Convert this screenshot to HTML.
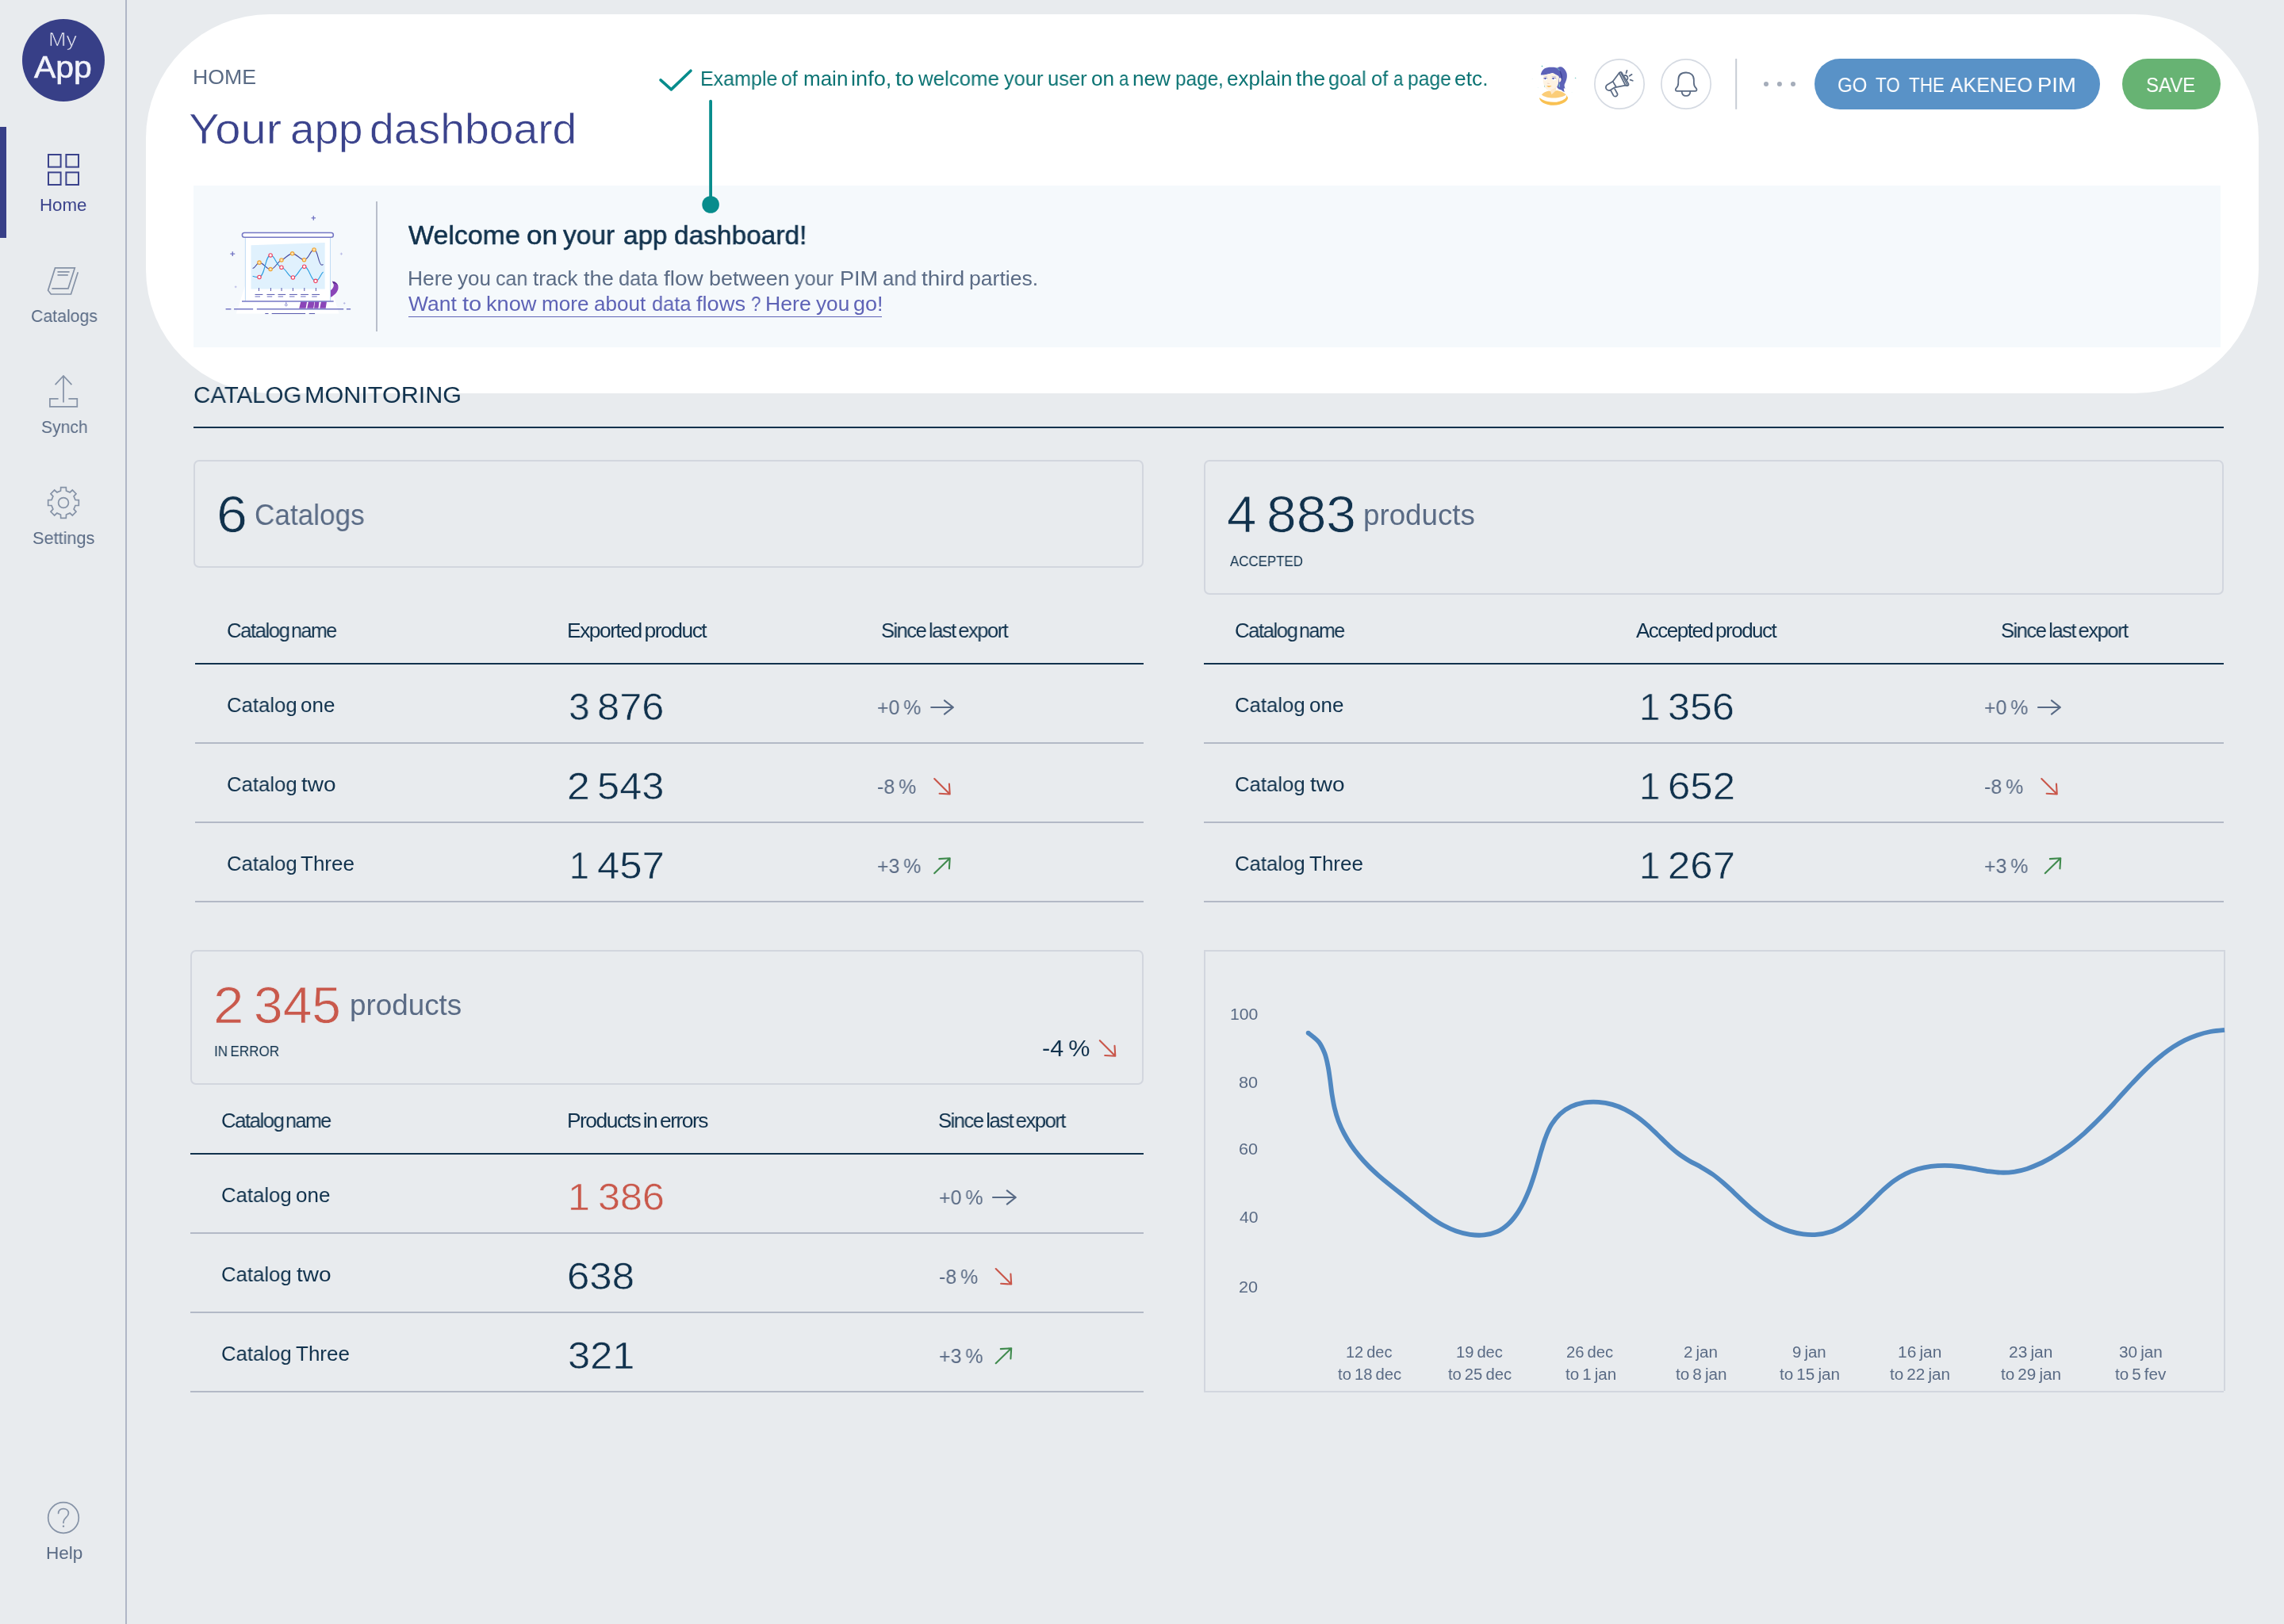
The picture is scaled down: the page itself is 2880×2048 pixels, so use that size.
<!DOCTYPE html>
<html lang="en"><head><meta charset="utf-8"><title>Your app dashboard</title>
<style>
html,body{margin:0;padding:0}
body{width:2880px;height:2048px;overflow:hidden;background:#e8ebee;font-family:"Liberation Sans",sans-serif;position:relative}
.t{position:absolute;white-space:pre;line-height:1;transform-origin:0 0;display:block;will-change:transform}
.r{position:absolute}
.card{position:absolute;box-sizing:border-box;border:2px solid #d2d6de}
.abs{position:absolute}
svg.ov{position:absolute;left:0;top:0;width:2880px;height:2048px;pointer-events:none}
</style></head>
<body>
<nav>
<div class="abs" style="left:158px;top:0;width:2px;height:2048px;background:#b0b7c6"></div>
<div class="abs" style="left:28px;top:23.7px;width:104px;height:104px;border-radius:50%;background:#373f87"></div>
<div class="abs" style="left:0;top:160px;width:8px;height:140px;background:#373f87"></div>
<span class="t" style="left:60.56px;top:38px;font-size:24px;color:rgba(255,255,255,.9);transform:scaleX(1.1200);-webkit-text-stroke:0.7px #373f87;">My</span>
<span class="t" style="left:42.80px;top:66px;font-size:38.5px;color:#f2f3fa;transform:scaleX(1.0622);-webkit-text-stroke:0.6px #f2f3fa;">App</span>
<span class="t" style="left:50.18px;top:248px;font-size:22px;color:#3b438c;transform:scaleX(1.0142);">Home</span>
<span class="t" style="left:39.03px;top:388px;font-size:22px;color:#5a6b85;transform:scaleX(0.9682);">Catalogs</span>
<span class="t" style="left:51.84px;top:528px;font-size:22px;color:#5a6b85;transform:scaleX(0.9573);">Synch</span>
<span class="t" style="left:40.61px;top:668px;font-size:22px;color:#5a6b85;transform:scaleX(0.9858);">Settings</span>
<span class="t" style="left:57.66px;top:1948px;font-size:22px;color:#5a6b85;transform:scaleX(1.0256);">Help</span>
</nav>
<header>
<div class="abs" style="left:184px;top:18px;width:2664px;height:478px;border-radius:156px;background:#fff"></div>
<div class="abs" style="left:244px;top:234px;width:2556px;height:204px;background:#f5f9fc"></div>
<div class="abs" style="left:474px;top:254px;width:2px;height:163.5px;background:#b9bfcb"></div>
<div class="abs" style="left:2288px;top:73.8px;width:360px;height:64.2px;border-radius:33px;background:#5992c7"></div>
<div class="abs" style="left:2675.8px;top:73.8px;width:124.2px;height:64.2px;border-radius:33px;background:#67b373"></div>
<span class="t" style="left:243.45px;top:84px;font-size:26px;color:#5a6b85;transform:scaleX(1.0267);">HOME</span>
<div class="s"><span class="t" style="left:238.35px;top:135px;font-size:54px;color:#3b438c;transform:scaleX(1.0731);-webkit-text-stroke:0.6px #ffffff;">Your</span> <span class="t" style="left:366.21px;top:135px;font-size:54px;color:#3b438c;transform:scaleX(1.0147);-webkit-text-stroke:0.6px #ffffff;">app</span> <span class="t" style="left:466.19px;top:135px;font-size:54px;color:#3b438c;transform:scaleX(1.0241);-webkit-text-stroke:0.6px #ffffff;">dashboard</span></div>
<div class="s"><span class="t" style="left:882.58px;top:86px;font-size:26px;color:#0b7373;transform:scaleX(0.9617);">Example</span> <span class="t" style="left:985.30px;top:86px;font-size:26px;color:#0b7373;transform:scaleX(0.9524);">of</span> <span class="t" style="left:1013.00px;top:86px;font-size:26px;color:#0b7373;transform:scaleX(1.0000);">main</span> <span class="t" style="left:1073.43px;top:86px;font-size:26px;color:#0b7373;transform:scaleX(1.0440);">info,</span> <span class="t" style="left:1128.96px;top:86px;font-size:26px;color:#0b7373;transform:scaleX(1.0875);">to</span> <span class="t" style="left:1158.00px;top:86px;font-size:26px;color:#0b7373;transform:scaleX(0.9926);">welcome</span> <span class="t" style="left:1266.25px;top:86px;font-size:26px;color:#0b7373;transform:scaleX(0.9750);">your</span> <span class="t" style="left:1321.03px;top:86px;font-size:26px;color:#0b7373;transform:scaleX(0.9794);">user</span> <span class="t" style="left:1375.99px;top:86px;font-size:26px;color:#0b7373;transform:scaleX(1.0094);">on</span> <span class="t" style="left:1410.59px;top:86px;font-size:26px;color:#0b7373;transform:scaleX(0.8600);">a</span> <span class="t" style="left:1428.49px;top:86px;font-size:26px;color:#0b7373;transform:scaleX(1.0054);">new</span> <span class="t" style="left:1482.35px;top:86px;font-size:26px;color:#0b7373;transform:scaleX(0.9350);">page,</span> <span class="t" style="left:1547.00px;top:86px;font-size:26px;color:#0b7373;transform:scaleX(1.0000);">explain</span> <span class="t" style="left:1633.99px;top:86px;font-size:26px;color:#0b7373;transform:scaleX(1.0290);">the</span> <span class="t" style="left:1675.28px;top:86px;font-size:26px;color:#0b7373;transform:scaleX(0.9677);">goal</span> <span class="t" style="left:1728.52px;top:86px;font-size:26px;color:#0b7373;transform:scaleX(0.9762);">of</span> <span class="t" style="left:1756.71px;top:86px;font-size:26px;color:#0b7373;transform:scaleX(0.8600);">a</span> <span class="t" style="left:1774.83px;top:86px;font-size:26px;color:#0b7373;transform:scaleX(0.9455);">page</span> <span class="t" style="left:1834.49px;top:86px;font-size:26px;color:#0b7373;transform:scaleX(1.0130);">etc.</span></div>
<div class="s"><span class="t" style="left:2317.37px;top:94px;font-size:26px;color:#ffffff;transform:scaleX(0.9211);">GO</span> <span class="t" style="left:2365.33px;top:94px;font-size:26px;color:#ffffff;transform:scaleX(0.8600);">TO</span> <span class="t" style="left:2406.57px;top:94px;font-size:26px;color:#ffffff;transform:scaleX(0.8614);">THE</span> <span class="t" style="left:2458.75px;top:94px;font-size:26px;color:#ffffff;transform:scaleX(0.9579);">AKENEO</span> <span class="t" style="left:2569.14px;top:94px;font-size:26px;color:#ffffff;transform:scaleX(1.0536);">PIM</span></div>
<span class="t" style="left:2705.62px;top:94px;font-size:26px;color:#ffffff;transform:scaleX(0.9231);">SAVE</span>
<div class="s"><span class="t" style="left:514.80px;top:279px;font-size:34px;color:#11324d;transform:scaleX(0.9979);-webkit-text-stroke:0.55px #11324d;">Welcome</span> <span class="t" style="left:663.96px;top:279px;font-size:34px;color:#11324d;transform:scaleX(1.0357);-webkit-text-stroke:0.55px #11324d;">on</span> <span class="t" style="left:710.00px;top:279px;font-size:34px;color:#11324d;transform:scaleX(0.9848);-webkit-text-stroke:0.55px #11324d;">your</span> <span class="t" style="left:785.77px;top:279px;font-size:34px;color:#11324d;transform:scaleX(0.9771);-webkit-text-stroke:0.55px #11324d;">app</span> <span class="t" style="left:850.27px;top:279px;font-size:34px;color:#11324d;transform:scaleX(0.9835);-webkit-text-stroke:0.55px #11324d;">dashboard!</span></div>
<div class="s"><span class="t" style="left:513.67px;top:338px;font-size:26px;color:#5a6b85;transform:scaleX(1.0151);">Here</span> <span class="t" style="left:577.00px;top:338px;font-size:26px;color:#5a6b85;transform:scaleX(1.0000);">you</span> <span class="t" style="left:624.79px;top:338px;font-size:26px;color:#5a6b85;transform:scaleX(0.9620);">can</span> <span class="t" style="left:672.00px;top:338px;font-size:26px;color:#5a6b85;transform:scaleX(1.0045);">track</span> <span class="t" style="left:736.48px;top:338px;font-size:26px;color:#5a6b85;transform:scaleX(1.0435);">the</span> <span class="t" style="left:780.28px;top:338px;font-size:26px;color:#5a6b85;transform:scaleX(0.9747);">data</span> <span class="t" style="left:836.96px;top:338px;font-size:26px;color:#5a6b85;transform:scaleX(1.0761);">flow</span> <span class="t" style="left:893.95px;top:338px;font-size:26px;color:#5a6b85;transform:scaleX(1.0342);">between</span> <span class="t" style="left:1002.00px;top:338px;font-size:26px;color:#5a6b85;transform:scaleX(0.9700);">your</span> <span class="t" style="left:1059.17px;top:338px;font-size:26px;color:#5a6b85;transform:scaleX(1.0417);">PIM</span> <span class="t" style="left:1112.76px;top:338px;font-size:26px;color:#5a6b85;transform:scaleX(0.9877);">and</span> <span class="t" style="left:1162.46px;top:338px;font-size:26px;color:#5a6b85;transform:scaleX(1.0722);">third</span> <span class="t" style="left:1222.22px;top:338px;font-size:26px;color:#5a6b85;transform:scaleX(1.0215);">parties.</span></div>
<div class="s"><span class="t" style="left:514.50px;top:370px;font-size:26px;color:#5e63b6;transform:scaleX(1.0168);">Want</span> <span class="t" style="left:583.24px;top:370px;font-size:26px;color:#5e63b6;transform:scaleX(1.1200);">to</span> <span class="t" style="left:612.93px;top:370px;font-size:26px;color:#5e63b6;transform:scaleX(1.0466);">know</span> <span class="t" style="left:682.99px;top:370px;font-size:26px;color:#5e63b6;transform:scaleX(1.0044);">more</span> <span class="t" style="left:748.50px;top:370px;font-size:26px;color:#5e63b6;transform:scaleX(1.0039);">about</span> <span class="t" style="left:821.53px;top:370px;font-size:26px;color:#5e63b6;transform:scaleX(0.9747);">data</span> <span class="t" style="left:878.23px;top:370px;font-size:26px;color:#5e63b6;transform:scaleX(1.0474);">flows</span> <span class="t" style="left:946.89px;top:370px;font-size:26px;color:#5e63b6;transform:scaleX(0.8600);">?</span> <span class="t" style="left:964.95px;top:370px;font-size:26px;color:#5e63b6;transform:scaleX(1.0236);">Here</span> <span class="t" style="left:1028.75px;top:370px;font-size:26px;color:#5e63b6;transform:scaleX(1.0062);">you</span> <span class="t" style="left:1076.46px;top:370px;font-size:26px;color:#5e63b6;transform:scaleX(1.0379);">go!</span></div>
<div class="abs" style="left:514.5px;top:398.6px;width:597.5px;height:1.6px;background:#5e63b6"></div>
</header>
<main>
<div class="s"><span class="t" style="left:243.53px;top:483px;font-size:30px;color:#11324d;transform:scaleX(0.9815);">CATALOG</span> <span class="t" style="left:384.45px;top:483px;font-size:30px;color:#11324d;transform:scaleX(1.0184);">MONITORING</span></div>
<div class="r" style="left:244px;top:538.00px;width:2560.00px;height:2px;background:#11324d"></div>
<div class="card" style="left:244px;top:580px;width:1198.00px;height:136.00px;border-radius:7px"></div>
<div class="card" style="left:1518px;top:580px;width:1286.00px;height:170.00px;border-radius:7px"></div>
<div class="card" style="left:240px;top:1198px;width:1202.00px;height:170.00px;border-radius:7px"></div>
<div class="abs" style="left:1518px;top:1198px;width:1286px;height:2px;background:#d2d6de"></div><div class="abs" style="left:1518px;top:1198px;width:2px;height:558px;background:#d2d6de"></div><div class="abs" style="left:1518px;top:1754px;width:1286px;height:2px;background:#d2d6de"></div><div class="abs" style="left:2804px;top:1198px;width:2px;height:556px;background:#d2d6de"></div>
<span class="t" style="left:273.17px;top:617px;font-size:64px;color:#11324d;transform:scaleX(1.0948);-webkit-text-stroke:0.75px #e8ebee;">6</span>
<span class="t" style="left:321.05px;top:632px;font-size:36px;color:#5a6b85;transform:scaleX(0.9766);">Catalogs</span>
<div class="s"><span class="t" style="left:1547.40px;top:617px;font-size:64px;color:#11324d;transform:scaleX(1.0476);-webkit-text-stroke:0.75px #e8ebee;">4</span> <span class="t" style="left:1596.83px;top:617px;font-size:64px;color:#11324d;transform:scaleX(1.0572);-webkit-text-stroke:0.75px #e8ebee;">883</span></div>
<span class="t" style="left:1719.45px;top:632px;font-size:36px;color:#5a6b85;transform:scaleX(1.0204);">products</span>
<span class="t" style="left:1550.75px;top:699px;font-size:18px;color:#11324d;transform:scaleX(0.9381);">ACCEPTED</span>
<div class="s"><span class="t" style="left:285.51px;top:782px;font-size:26px;color:#11324d;transform:scaleX(0.9903);letter-spacing:-1.5px;">Catalog</span> <span class="t" style="left:366.56px;top:782px;font-size:26px;color:#11324d;transform:scaleX(0.9612);letter-spacing:-1.5px;">name</span></div>
<span class="t" style="left:714.96px;top:782px;font-size:26px;color:#11324d;transform:scaleX(1.0190);letter-spacing:-1.5px;word-spacing:-0.08em;">Exported product</span>
<span class="t" style="left:1111.03px;top:782px;font-size:26px;color:#11324d;transform:scaleX(0.9797);letter-spacing:-1.5px;word-spacing:-0.08em;">Since last export</span>
<div class="s"><span class="t" style="left:285.52px;top:876px;font-size:26px;color:#11324d;transform:scaleX(0.9884);">Catalog</span> <span class="t" style="left:379.00px;top:876px;font-size:26px;color:#11324d;transform:scaleX(1.0000);">one</span></div>
<div class="s"><span class="t" style="left:285.52px;top:976px;font-size:26px;color:#11324d;transform:scaleX(0.9884);">Catalog</span> <span class="t" style="left:379.96px;top:976px;font-size:26px;color:#11324d;transform:scaleX(1.0769);">two</span></div>
<div class="s"><span class="t" style="left:285.52px;top:1076px;font-size:26px;color:#11324d;transform:scaleX(0.9884);">Catalog</span> <span class="t" style="left:379.00px;top:1076px;font-size:26px;color:#11324d;transform:scaleX(1.0000);">Three</span></div>
<div class="s"><span class="t" style="left:716.79px;top:867px;font-size:49px;color:#11324d;transform:scaleX(0.9783);-webkit-text-stroke:0.55px #e8ebee;">3</span> <span class="t" style="left:752.92px;top:867px;font-size:49px;color:#11324d;transform:scaleX(1.0325);-webkit-text-stroke:0.55px #e8ebee;">876</span></div>
<div class="s"><span class="t" style="left:715.36px;top:967px;font-size:49px;color:#11324d;transform:scaleX(1.0568);-webkit-text-stroke:0.55px #e8ebee;">2</span> <span class="t" style="left:752.92px;top:967px;font-size:49px;color:#11324d;transform:scaleX(1.0325);-webkit-text-stroke:0.55px #e8ebee;">543</span></div>
<div class="s"><span class="t" style="left:717.59px;top:1067px;font-size:49px;color:#11324d;transform:scaleX(0.9146);-webkit-text-stroke:0.55px #e8ebee;">1</span> <span class="t" style="left:752.94px;top:1067px;font-size:49px;color:#11324d;transform:scaleX(1.0387);-webkit-text-stroke:0.55px #e8ebee;">457</span></div>
<span class="t" style="left:1106.04px;top:879px;font-size:26px;color:#5a6b85;transform:scaleX(0.9554);word-spacing:-0.08em;">+0 %</span>
<span class="t" style="left:1106.04px;top:979px;font-size:26px;color:#5a6b85;transform:scaleX(0.9596);word-spacing:-0.08em;">-8 %</span>
<span class="t" style="left:1106.04px;top:1079px;font-size:26px;color:#5a6b85;transform:scaleX(0.9554);word-spacing:-0.08em;">+3 %</span>
<div class="s"><span class="t" style="left:1557.26px;top:782px;font-size:26px;color:#11324d;transform:scaleX(0.9903);letter-spacing:-1.5px;">Catalog</span> <span class="t" style="left:1638.31px;top:782px;font-size:26px;color:#11324d;transform:scaleX(0.9612);letter-spacing:-1.5px;">name</span></div>
<span class="t" style="left:2062.50px;top:782px;font-size:26px;color:#11324d;transform:scaleX(1.0000);letter-spacing:-1.5px;word-spacing:-0.08em;">Accepted product</span>
<span class="t" style="left:2522.78px;top:782px;font-size:26px;color:#11324d;transform:scaleX(0.9825);letter-spacing:-1.5px;word-spacing:-0.08em;">Since last export</span>
<div class="s"><span class="t" style="left:1557.27px;top:876px;font-size:26px;color:#11324d;transform:scaleX(0.9884);">Catalog</span> <span class="t" style="left:1650.75px;top:876px;font-size:26px;color:#11324d;transform:scaleX(1.0000);">one</span></div>
<div class="s"><span class="t" style="left:1557.27px;top:976px;font-size:26px;color:#11324d;transform:scaleX(0.9884);">Catalog</span> <span class="t" style="left:1651.71px;top:976px;font-size:26px;color:#11324d;transform:scaleX(1.0769);">two</span></div>
<div class="s"><span class="t" style="left:1557.27px;top:1076px;font-size:26px;color:#11324d;transform:scaleX(0.9884);">Catalog</span> <span class="t" style="left:1650.75px;top:1076px;font-size:26px;color:#11324d;transform:scaleX(1.0000);">Three</span></div>
<div class="s"><span class="t" style="left:2067.35px;top:867px;font-size:49px;color:#11324d;transform:scaleX(0.9756);-webkit-text-stroke:0.55px #e8ebee;">1</span> <span class="t" style="left:2103.45px;top:867px;font-size:49px;color:#11324d;transform:scaleX(1.0258);-webkit-text-stroke:0.55px #e8ebee;">356</span></div>
<div class="s"><span class="t" style="left:2067.35px;top:967px;font-size:49px;color:#11324d;transform:scaleX(0.9756);-webkit-text-stroke:0.55px #e8ebee;">1</span> <span class="t" style="left:2102.90px;top:967px;font-size:49px;color:#11324d;transform:scaleX(1.0392);-webkit-text-stroke:0.55px #e8ebee;">652</span></div>
<div class="s"><span class="t" style="left:2067.35px;top:1067px;font-size:49px;color:#11324d;transform:scaleX(0.9756);-webkit-text-stroke:0.55px #e8ebee;">1</span> <span class="t" style="left:2102.90px;top:1067px;font-size:49px;color:#11324d;transform:scaleX(1.0392);-webkit-text-stroke:0.55px #e8ebee;">267</span></div>
<span class="t" style="left:2502.04px;top:879px;font-size:26px;color:#5a6b85;transform:scaleX(0.9554);word-spacing:-0.08em;">+0 %</span>
<span class="t" style="left:2502.04px;top:979px;font-size:26px;color:#5a6b85;transform:scaleX(0.9596);word-spacing:-0.08em;">-8 %</span>
<span class="t" style="left:2502.04px;top:1079px;font-size:26px;color:#5a6b85;transform:scaleX(0.9554);word-spacing:-0.08em;">+3 %</span>
<div class="s"><span class="t" style="left:269.22px;top:1236px;font-size:64px;color:#c9594c;transform:scaleX(1.0789);-webkit-text-stroke:0.75px #e8ebee;">2</span> <span class="t" style="left:319.91px;top:1236px;font-size:64px;color:#c9594c;transform:scaleX(1.0297);-webkit-text-stroke:0.75px #e8ebee;">345</span></div>
<span class="t" style="left:441.19px;top:1250px;font-size:36px;color:#5a6b85;transform:scaleX(1.0223);">products</span>
<span class="t" style="left:269.83px;top:1317px;font-size:18px;color:#11324d;transform:scaleX(0.9494);word-spacing:-0.08em;">IN ERROR</span>
<span class="t" style="left:1313.97px;top:1307px;font-size:30px;color:#11324d;transform:scaleX(1.0175);word-spacing:-0.08em;">-4 %</span>
<div class="s"><span class="t" style="left:279.26px;top:1400px;font-size:26px;color:#11324d;transform:scaleX(0.9903);letter-spacing:-1.5px;">Catalog</span> <span class="t" style="left:360.31px;top:1400px;font-size:26px;color:#11324d;transform:scaleX(0.9612);letter-spacing:-1.5px;">name</span></div>
<span class="t" style="left:715.47px;top:1400px;font-size:26px;color:#11324d;transform:scaleX(1.0162);letter-spacing:-1.5px;word-spacing:-0.08em;">Products in errors</span>
<span class="t" style="left:1182.92px;top:1400px;font-size:26px;color:#11324d;transform:scaleX(0.9840);letter-spacing:-1.5px;word-spacing:-0.08em;">Since last export</span>
<div class="s"><span class="t" style="left:279.27px;top:1494px;font-size:26px;color:#11324d;transform:scaleX(0.9884);">Catalog</span> <span class="t" style="left:372.75px;top:1494px;font-size:26px;color:#11324d;transform:scaleX(1.0000);">one</span></div>
<div class="s"><span class="t" style="left:279.27px;top:1594px;font-size:26px;color:#11324d;transform:scaleX(0.9884);">Catalog</span> <span class="t" style="left:373.71px;top:1594px;font-size:26px;color:#11324d;transform:scaleX(1.0769);">two</span></div>
<div class="s"><span class="t" style="left:279.27px;top:1694px;font-size:26px;color:#11324d;transform:scaleX(0.9884);">Catalog</span> <span class="t" style="left:372.75px;top:1694px;font-size:26px;color:#11324d;transform:scaleX(1.0000);">Three</span></div>
<div class="s"><span class="t" style="left:716.40px;top:1485px;font-size:49px;color:#c9594c;transform:scaleX(1.0244);-webkit-text-stroke:0.55px #e8ebee;">1</span> <span class="t" style="left:753.95px;top:1485px;font-size:49px;color:#c9594c;transform:scaleX(1.0258);-webkit-text-stroke:0.55px #e8ebee;">386</span></div>
<span class="t" style="left:715.40px;top:1585px;font-size:49px;color:#11324d;transform:scaleX(1.0390);-webkit-text-stroke:0.55px #e8ebee;">638</span>
<span class="t" style="left:716.44px;top:1685px;font-size:49px;color:#11324d;transform:scaleX(1.0325);-webkit-text-stroke:0.55px #e8ebee;">321</span>
<span class="t" style="left:1184.04px;top:1497px;font-size:26px;color:#5a6b85;transform:scaleX(0.9589);word-spacing:-0.08em;">+0 %</span>
<span class="t" style="left:1184.04px;top:1597px;font-size:26px;color:#5a6b85;transform:scaleX(0.9576);word-spacing:-0.08em;">-8 %</span>
<span class="t" style="left:1184.04px;top:1697px;font-size:26px;color:#5a6b85;transform:scaleX(0.9589);word-spacing:-0.08em;">+3 %</span>
<span class="t" style="left:1551.21px;top:1269px;font-size:20px;color:#5a6b85;transform:scaleX(1.0613);">100</span>
<span class="t" style="left:1562.42px;top:1355px;font-size:20px;color:#5a6b85;transform:scaleX(1.0829);">80</span>
<span class="t" style="left:1562.42px;top:1439px;font-size:20px;color:#5a6b85;transform:scaleX(1.0829);">60</span>
<span class="t" style="left:1562.97px;top:1525px;font-size:20px;color:#5a6b85;transform:scaleX(1.0571);">40</span>
<span class="t" style="left:1562.42px;top:1613px;font-size:20px;color:#5a6b85;transform:scaleX(1.0829);">20</span>
<span class="t" style="left:1696.91px;top:1695px;font-size:20px;color:#5a6b85;transform:scaleX(0.9947);word-spacing:-0.08em;">12 dec</span>
<span class="t" style="left:1686.75px;top:1723px;font-size:20px;color:#5a6b85;transform:scaleX(1.0127);word-spacing:-0.08em;">to 18 dec</span>
<span class="t" style="left:1835.64px;top:1695px;font-size:20px;color:#5a6b85;transform:scaleX(1.0071);word-spacing:-0.08em;">19 dec</span>
<span class="t" style="left:1825.90px;top:1723px;font-size:20px;color:#5a6b85;transform:scaleX(1.0115);word-spacing:-0.08em;">to 25 dec</span>
<span class="t" style="left:1975.49px;top:1695px;font-size:20px;color:#5a6b85;transform:scaleX(1.0105);word-spacing:-0.08em;">26 dec</span>
<span class="t" style="left:1973.90px;top:1723px;font-size:20px;color:#5a6b85;transform:scaleX(1.0295);word-spacing:-0.08em;">to 1 jan</span>
<span class="t" style="left:2123.12px;top:1695px;font-size:20px;color:#5a6b85;transform:scaleX(1.0304);word-spacing:-0.08em;">2 jan</span>
<span class="t" style="left:2112.95px;top:1723px;font-size:20px;color:#5a6b85;transform:scaleX(1.0344);word-spacing:-0.08em;">to 8 jan</span>
<span class="t" style="left:2260.03px;top:1695px;font-size:20px;color:#5a6b85;transform:scaleX(1.0203);word-spacing:-0.08em;">9 jan</span>
<span class="t" style="left:2243.75px;top:1723px;font-size:20px;color:#5a6b85;transform:scaleX(1.0331);word-spacing:-0.08em;">to 15 jan</span>
<span class="t" style="left:2392.63px;top:1695px;font-size:20px;color:#5a6b85;transform:scaleX(1.0480);word-spacing:-0.08em;">16 jan</span>
<span class="t" style="left:2382.90px;top:1723px;font-size:20px;color:#5a6b85;transform:scaleX(1.0345);word-spacing:-0.08em;">to 22 jan</span>
<span class="t" style="left:2533.25px;top:1695px;font-size:20px;color:#5a6b85;transform:scaleX(1.0455);word-spacing:-0.08em;">23 jan</span>
<span class="t" style="left:2523.20px;top:1723px;font-size:20px;color:#5a6b85;transform:scaleX(1.0345);word-spacing:-0.08em;">to 29 jan</span>
<span class="t" style="left:2671.86px;top:1695px;font-size:20px;color:#5a6b85;transform:scaleX(1.0376);word-spacing:-0.08em;">30 jan</span>
<span class="t" style="left:2667.15px;top:1723px;font-size:20px;color:#5a6b85;transform:scaleX(1.0306);word-spacing:-0.08em;">to 5 fev</span>
<div class="r" style="left:246px;top:836.00px;width:1196.00px;height:2px;background:#11324d"></div>
<div class="r" style="left:246px;top:936.00px;width:1196.00px;height:2px;background:#b3b9c6"></div>
<div class="r" style="left:246px;top:1036.00px;width:1196.00px;height:2px;background:#b3b9c6"></div>
<div class="r" style="left:246px;top:1136.00px;width:1196.00px;height:2px;background:#b3b9c6"></div>
<div class="r" style="left:1518px;top:836.00px;width:1286.00px;height:2px;background:#11324d"></div>
<div class="r" style="left:1518px;top:936.00px;width:1286.00px;height:2px;background:#b3b9c6"></div>
<div class="r" style="left:1518px;top:1036.00px;width:1286.00px;height:2px;background:#b3b9c6"></div>
<div class="r" style="left:1518px;top:1136.00px;width:1286.00px;height:2px;background:#b3b9c6"></div>
<div class="r" style="left:240px;top:1454.00px;width:1202.00px;height:2px;background:#11324d"></div>
<div class="r" style="left:240px;top:1554.00px;width:1202.00px;height:2px;background:#b3b9c6"></div>
<div class="r" style="left:240px;top:1654.00px;width:1202.00px;height:2px;background:#b3b9c6"></div>
<div class="r" style="left:240px;top:1754.00px;width:1202.00px;height:2px;background:#b3b9c6"></div>
</main>
<svg class="ov" viewBox="0 0 2880 2048">

<g fill="none" stroke="#3b438c" stroke-width="2">
<rect x="61" y="195" width="15.6" height="15.6"/><rect x="83.4" y="195" width="15.6" height="15.6"/>
<rect x="61" y="217.4" width="15.6" height="15.6"/><rect x="83.4" y="217.4" width="15.6" height="15.6"/>
</g>
<g fill="none" stroke="#8592a6" stroke-width="1.7" stroke-linejoin="miter">
<path d="M65.4 363.8H86L94.3 337.9H69.5L60.6 366.2L64.3 371H89.5L98.3 343.3M72.5 342.9H87.6M72.5 346.9H85.8"/>
<path d="M80 507.6V473.9M69.6 485.2L80 473.9L90.4 485.2M73.6 502.8H62.9V512.9H97.3V502.8H86.4"/>
<path d="M76.49 619.01L76.68 614.68L83.32 614.68L83.51 619.01L88.12 620.91L91.31 618.00L96.00 622.69L93.09 625.88L94.99 630.49L99.32 630.68L99.32 637.32L94.99 637.51L93.09 642.12L96.00 645.31L91.31 650.00L88.12 647.09L83.51 648.99L83.32 653.32L76.68 653.32L76.49 648.99L71.88 647.09L68.69 650.00L64.00 645.31L66.91 642.12L65.01 637.51L60.68 637.32L60.68 630.68L65.01 630.49L66.91 625.88L64.00 622.69L68.69 618.00L71.88 620.91Z"/><circle cx="80" cy="634" r="6.4"/>
<circle cx="80" cy="1914" r="19.3"/>
<path d="M73.6 1908.5C73.8 1904.6 76.6 1902.6 80 1902.6C83.8 1902.6 86.4 1905 86.4 1908.2C86.4 1913.5 80 1913.8 80 1919.5V1920.5" stroke-linecap="round"/>
<circle cx="80" cy="1924.8" r="1.2" fill="#8592a6" stroke="none"/>
</g>

<svg x="2005" y="70" width="75" height="72" viewBox="0 0 1692 1624" fill="none" stroke-linecap="round" stroke-linejoin="round">
<circle cx="835" cy="812" r="703" stroke="#d5dae2" stroke-width="38"/>
<g stroke="#5b6b84" stroke-width="40">
<path d="M646 738L486 836C440 866 436 930 476 968C510 998 552 1000 590 978L700 908L1006 848"/>
<path d="M646 738L828 498"/>
<path d="M828 498C840 476 872 462 896 484L1092 806C1104 834 1084 862 1046 858L1006 848Z"/>
<path d="M880 500L1056 838" stroke-width="30"/>
<path d="M652 748L736 886"/>
<path d="M592 1000L664 1136C690 1176 740 1176 768 1140C782 1120 782 1096 772 1078L702 950"/>
<path d="M984 566C1030 556 1072 590 1072 636C1072 660 1064 680 1048 692"/>
<path d="M1050 424L1026 500M1188 538L1122 580M1142 692L1214 716"/>
</g>
</svg>
<svg x="2089" y="70" width="75" height="72" viewBox="0 0 1692 1624" fill="none" stroke-linecap="round" stroke-linejoin="round">
<circle cx="835" cy="812" r="703" stroke="#d5dae2" stroke-width="38"/>
<g stroke="#5b6b84" stroke-width="40">
<path d="M575 1012C530 1010 525 960 555 930C600 890 615 860 615 780V700C615 560 700 485 835 485C970 485 1058 560 1058 700V780C1058 860 1075 890 1120 930C1150 960 1145 1010 1100 1012Z"/>
<path d="M715 1016C715 1100 760 1150 835 1150C910 1150 955 1100 955 1016"/>
</g>
</svg>
<line x1="2189.2" y1="74" x2="2189.2" y2="137.8" stroke="#c7ccd5" stroke-width="2"/>
<g fill="#a5adba"><circle cx="2227" cy="106" r="3"/><circle cx="2243.9" cy="106" r="3"/><circle cx="2261" cy="106" r="3"/></g>
<svg x="1925" y="75" width="70" height="65" viewBox="0 0 1749 1624">
<path d="M445 490C450 420 500 330 560 290C620 250 720 235 850 245C900 250 940 262 962 272C990 245 1050 225 1100 235C1160 250 1230 330 1262 430C1280 500 1275 600 1232 700C1205 760 1180 800 1190 830C1195 870 1205 895 1218 912C1200 915 1185 910 1170 900C1170 950 1180 990 1196 1022C1150 1010 1120 985 1100 960C1060 950 1020 935 1005 928L950 870C985 810 1000 760 1000 700L1020 560L1000 520L820 425L560 490Z" fill="#5d62b8"/>
<path d="M1040 335C1080 380 1105 440 1118 520C1128 590 1122 650 1100 705C1100 620 1090 520 1060 450C1050 410 1045 370 1040 335Z" fill="#3b4094"/>
<path d="M525 498L560 490L700 460L820 425L900 470L1010 540L1000 720L960 850L900 920L760 982L640 950L560 860L520 700Z" fill="#fef3e2"/>
<path d="M1025 590C1060 570 1095 585 1090 630C1085 680 1060 715 1018 722Z" fill="#fef3e2"/>
<path d="M760 962L922 880L930 990L800 1100L740 1020Z" fill="#fde9cb"/>
<path d="M470 1110C520 1050 610 1005 700 987L750 1002L790 1100L900 1002L950 975C1060 990 1180 1040 1245 1105C1180 1170 1020 1212 850 1212C690 1212 540 1170 470 1110Z" fill="#fbcd78"/>
<path d="M400 1200C400 1260 440 1320 520 1365C610 1415 730 1442 850 1442C980 1442 1110 1412 1200 1350C1270 1300 1305 1250 1300 1200L1252 1120C1262 1180 1250 1200 1200 1240C1110 1305 980 1345 850 1345C720 1345 610 1320 520 1275C460 1245 420 1220 400 1200Z" fill="#f9c152"/>
<path d="M535 625C560 590 620 585 650 615C645 650 610 668 575 660C555 655 540 642 535 625Z" fill="#ffffff"/>
<path d="M800 625C825 590 895 585 928 612C925 650 890 668 850 662C825 658 808 645 800 625Z" fill="#ffffff"/>
<circle cx="585" cy="602" r="27" fill="#4a4fb0"/><circle cx="838" cy="602" r="27" fill="#4a4fb0"/>
<path d="M528 600C560 575 620 572 655 596M795 598C830 572 895 572 932 598" stroke="#4a4fb0" stroke-width="14" fill="none"/>
<path d="M562 532H648M792 536L928 542" stroke="#b9b6e4" stroke-width="16" fill="none"/>
<path d="M650 752L720 764" stroke="#e9c9bc" stroke-width="20" fill="none"/>
<path d="M630 830C680 822 740 822 790 830C760 862 720 874 700 874C675 874 650 858 630 830Z" fill="#f9c468"/>
<path d="M565 800L578 870H553Z M1030 720L1052 860L1008 862Z" fill="#7fcfc8"/>
<path d="M950 255L1042 352" stroke="#6ec6c0" stroke-width="22" fill="none"/>
<path d="M488 178L498 202L522 212L498 222L488 246L478 222L454 212L478 202Z M1540 555L1548 577L1570 585L1548 593L1540 615L1532 593L1510 585L1532 577Z" fill="#6ec6c0"/>
<circle cx="180" cy="605" r="12" fill="#d4efec"/><circle cx="355" cy="885" r="12" fill="#d4efec"/><circle cx="1425" cy="1040" r="12" fill="#d4efec"/>
</svg>
<g fill="none" stroke="#078c8c" stroke-linecap="round" stroke-linejoin="round">
<path d="M833 100.9L846.4 112.9L871 89.2" stroke-width="3.6"/>
<path d="M896.1 127.6V256" stroke-width="3.8"/>
</g>
<circle cx="896.1" cy="258" r="10.8" fill="#078c8c"/>
<svg x="260" y="250" width="220" height="170" viewBox="0 0 2102 1624">
<path d="M470 1050H1500L1600 1390H360Z" fill="#ffffff"/>
<path d="M1497 1195C1560 1160 1600 1110 1590 1060C1580 1020 1550 1005 1520 1000C1545 1040 1545 1075 1497 1110Z" fill="#8a45b8"/>
<path d="M1520 1000C1550 1005 1580 1020 1592 1062C1570 1030 1548 1022 1530 1030Z" fill="#5b2a92"/>
<path d="M1140 1245H1215L1200 1325H1120Z M1232 1245H1305L1292 1325H1215Z M1310 1245H1362L1352 1325H1300Z M1385 1245H1452L1440 1325H1368Z" fill="#8a45b8"/>
<rect x="470" y="470" width="1027" height="772" fill="#ffffff"/>
<path d="M472 470V1240M1495 470V1240" stroke="#a9cdf0" stroke-width="7"/>
<path d="M540 565L1430 535V1095H540Z" fill="#e0f1fd"/>
<rect x="434" y="416" width="1098" height="54" rx="26" fill="#ffffff" stroke="#7477c4" stroke-width="15"/>
<path d="M430 1242H1535" stroke="#7477c4" stroke-width="13"/>
<path d="M963 1248V1270" stroke="#7477c4" stroke-width="8"/><circle cx="963" cy="1285" r="13" fill="none" stroke="#7477c4" stroke-width="8"/>
<path d="M235 1335H300M335 1335H565M610 1335H1655M1690 1335H1740" stroke="#7477c4" stroke-width="13"/>
<path d="M710 1390H750M790 1390H1195M1240 1390H1310" stroke="#4d4fa8" stroke-width="9"/>
<path d="M635 1080V1118M778 1080V1118M908 1080V1118M1045 1080V1118M1183 1080V1118M1322 1080V1118" stroke="#4d4fa8" stroke-width="9"/>
<path d="M588 1160H682M730 1160H825M865 1160H957M1003 1160H1097M1138 1160H1232M1273 1160H1367" stroke="#4d4fa8" stroke-width="9"/>
<path d="M588 1185H650M733 1185H795M866 1185H928M1003 1185H1065M1138 1185H1200M1273 1185H1335" stroke="#9d9fd8" stroke-width="13"/>
<path d="M560 845C600 835 610 775 640 775C690 775 720 855 775 855C830 855 850 770 907 745C960 725 990 667 1038 667C1090 667 1130 742 1180 742C1240 742 1250 620 1300 620C1350 620 1350 810 1395 805L1410 798" fill="none" stroke="#4a4b9e" stroke-width="11"/>
<path d="M560 938C590 950 610 955 640 950C710 940 710 687 775 687C830 687 840 810 907 833C970 850 990 955 1045 955C1100 955 1130 823 1182 823C1240 823 1260 997 1318 997C1365 997 1375 910 1410 888" fill="none" stroke="#2f9fe0" stroke-width="11"/>
<g fill="#fbe3b5" stroke="#f0a22e" stroke-width="11"><circle cx="640" cy="775" r="21"/><circle cx="775" cy="855" r="21"/><circle cx="907" cy="745" r="21"/><circle cx="1038" cy="667" r="21"/><circle cx="1180" cy="742" r="21"/><circle cx="1300" cy="620" r="21"/></g>
<g fill="#ffffff" stroke="#f0405f" stroke-width="11"><circle cx="640" cy="950" r="21"/><circle cx="775" cy="687" r="21"/><circle cx="907" cy="833" r="21"/><circle cx="1045" cy="955" r="21"/><circle cx="1182" cy="823" r="21"/><circle cx="1318" cy="997" r="21"/></g>
<path d="M1293 212V264M1267 238H1319M318 642V698M290 670H346" stroke="#7477c4" stroke-width="13"/>
<path d="M1628 655V685M1613 670H1643M355 1055V1081M342 1068H368M1665 1252V1278M1652 1265H1678" stroke="#a9abdf" stroke-width="7"/>
</svg>
<g fill="none" stroke-width="2.1" stroke-linecap="round" stroke-linejoin="round"><path d="M1174.2 892H1201.5M1190.9 883.4L1201.9 892L1190.9 900.6" stroke="#586a85"/><path d="M1178.2 982L1197.7 1001.5M1196.9 988.5L1197.7 1001.5L1184.6000000000001 1000.8" stroke="#c9564a"/><path d="M1178.2 1101.2L1197.7 1082.3M1184.3 1083.1L1197.7 1082.3L1196.9 1095.3999999999999" stroke="#3f8a4d"/><path d="M2570 892H2597.5M2586.9 883.4L2597.9 892L2586.9 900.6" stroke="#586a85"/><path d="M2574.25 982L2593.75 1001.5M2592.95 988.5L2593.75 1001.5L2580.65 1000.8" stroke="#c9564a"/><path d="M2578.75 1101.2L2598.25 1082.3M2584.85 1083.1L2598.25 1082.3L2597.45 1095.3999999999999" stroke="#3f8a4d"/><path d="M1252 1510H1280.4M1269.8000000000002 1501.4L1280.8000000000002 1510L1269.8000000000002 1518.6" stroke="#586a85"/><path d="M1255.7 1600L1275.2 1619.5M1274.4 1606.5L1275.2 1619.5L1262.1000000000001 1618.8" stroke="#c9564a"/><path d="M1255.7 1719.2L1275.2 1700.3M1261.8 1701.1L1275.2 1700.3L1274.4 1713.3999999999999" stroke="#3f8a4d"/><path d="M1386.8 1312.2L1406.3 1331.7M1405.5 1318.7L1406.3 1331.7L1393.2 1331.0" stroke="#c9564a"/></g>
<path d="M1649.6 1302.6C1651.8 1304.5 1659.5 1309.8 1663.0 1314.1C1666.4 1318.4 1668.4 1323.3 1670.4 1328.4C1672.3 1333.4 1673.4 1339.0 1674.5 1344.6C1675.7 1350.1 1676.3 1356.1 1677.2 1361.9C1678.0 1367.8 1678.6 1373.9 1679.5 1379.8C1680.5 1385.7 1681.4 1391.6 1682.8 1397.3C1684.1 1403.0 1685.8 1408.6 1687.8 1413.9C1689.9 1419.3 1692.2 1424.5 1694.9 1429.5C1697.5 1434.5 1700.5 1439.4 1703.6 1444.1C1706.8 1448.8 1710.3 1453.3 1713.9 1457.7C1717.5 1462.1 1721.4 1466.3 1725.5 1470.4C1729.5 1474.5 1733.8 1478.4 1738.2 1482.3C1742.5 1486.1 1747.0 1489.8 1751.6 1493.5C1756.1 1497.2 1760.7 1500.8 1765.3 1504.4C1769.8 1508.0 1774.4 1511.6 1778.8 1515.2C1783.3 1518.8 1787.6 1522.5 1792.1 1526.0C1796.6 1529.5 1800.9 1533.1 1805.6 1536.3C1810.3 1539.5 1815.0 1542.7 1820.0 1545.3C1825.1 1548.0 1830.5 1550.6 1836.1 1552.5C1841.6 1554.4 1847.6 1556.0 1853.5 1556.9C1859.4 1557.7 1865.6 1558.1 1871.4 1557.4C1877.1 1556.8 1882.9 1555.5 1888.0 1553.2C1893.0 1551.0 1897.5 1547.6 1901.6 1543.9C1905.7 1540.2 1909.3 1535.6 1912.5 1531.0C1915.8 1526.4 1918.6 1521.3 1921.2 1516.2C1923.8 1511.1 1926.0 1505.8 1928.2 1500.4C1930.3 1495.1 1932.1 1489.6 1933.9 1484.0C1935.7 1478.5 1937.3 1472.9 1938.9 1467.2C1940.6 1461.5 1942.0 1455.7 1943.8 1450.1C1945.5 1444.4 1947.1 1438.6 1949.3 1433.3C1951.4 1427.9 1953.6 1422.5 1956.6 1417.8C1959.6 1413.1 1963.0 1408.5 1967.1 1404.8C1971.2 1401.1 1976.1 1397.8 1981.2 1395.4C1986.4 1393.0 1992.2 1391.4 1997.9 1390.4C2003.7 1389.5 2009.8 1389.4 2015.7 1389.8C2021.5 1390.2 2027.5 1391.3 2033.0 1392.9C2038.6 1394.4 2043.9 1396.6 2049.0 1399.1C2054.0 1401.6 2058.8 1404.6 2063.5 1407.9C2068.2 1411.1 2072.6 1414.8 2077.0 1418.6C2081.3 1422.3 2085.5 1426.5 2089.7 1430.5C2093.9 1434.5 2098.0 1438.8 2102.3 1442.7C2106.6 1446.6 2110.9 1450.6 2115.5 1454.1C2120.0 1457.6 2124.9 1460.7 2129.8 1463.7C2134.8 1466.7 2140.2 1469.0 2145.1 1471.9C2150.1 1474.8 2155.0 1477.7 2159.7 1481.0C2164.3 1484.3 2168.7 1488.0 2173.1 1491.7C2177.4 1495.4 2181.6 1499.4 2185.8 1503.3C2190.0 1507.3 2194.1 1511.3 2198.4 1515.3C2202.6 1519.2 2206.8 1523.1 2211.3 1526.8C2215.7 1530.5 2220.2 1534.1 2225.0 1537.3C2229.9 1540.5 2234.9 1543.5 2240.2 1546.1C2245.4 1548.6 2251.0 1550.9 2256.6 1552.6C2262.2 1554.3 2268.0 1555.6 2273.7 1556.3C2279.3 1557.1 2285.1 1557.3 2290.7 1556.9C2296.2 1556.5 2301.8 1555.5 2307.0 1553.8C2312.3 1552.2 2317.3 1549.7 2322.2 1546.9C2327.0 1544.1 2331.7 1540.6 2336.2 1537.0C2340.8 1533.4 2345.2 1529.3 2349.5 1525.2C2353.9 1521.1 2358.0 1516.7 2362.3 1512.6C2366.5 1508.4 2370.7 1504.1 2375.0 1500.2C2379.4 1496.2 2383.7 1492.4 2388.3 1489.1C2393.0 1485.8 2397.7 1482.8 2402.7 1480.3C2407.7 1477.9 2412.9 1475.9 2418.3 1474.3C2423.7 1472.8 2429.2 1471.7 2434.8 1470.9C2440.5 1470.2 2446.3 1469.9 2452.1 1469.9C2457.9 1469.9 2463.8 1470.3 2469.7 1471.0C2475.6 1471.6 2481.5 1472.7 2487.4 1473.7C2493.3 1474.6 2499.2 1476.0 2505.0 1476.8C2510.9 1477.6 2516.7 1478.5 2522.4 1478.7C2528.2 1478.9 2533.9 1478.6 2539.5 1477.8C2545.1 1477.0 2550.6 1475.6 2556.0 1473.9C2561.4 1472.1 2566.7 1469.9 2571.9 1467.5C2577.1 1465.2 2582.1 1462.4 2587.1 1459.6C2592.0 1456.7 2596.7 1453.6 2601.4 1450.4C2606.1 1447.2 2610.6 1443.8 2615.1 1440.2C2619.5 1436.6 2623.9 1432.9 2628.2 1429.1C2632.4 1425.2 2636.6 1421.3 2640.8 1417.2C2644.9 1413.2 2649.0 1409.0 2653.1 1404.8C2657.1 1400.5 2661.1 1396.2 2665.1 1391.9C2669.1 1387.5 2673.0 1383.1 2677.0 1378.8C2681.0 1374.4 2684.9 1370.0 2689.0 1365.8C2693.0 1361.5 2697.0 1357.2 2701.1 1353.1C2705.2 1349.0 2709.4 1345.0 2713.6 1341.1C2717.9 1337.3 2722.2 1333.5 2726.7 1330.1C2731.1 1326.6 2735.7 1323.3 2740.4 1320.2C2745.1 1317.2 2749.9 1314.4 2754.9 1311.9C2759.9 1309.5 2765.1 1307.2 2770.4 1305.4C2775.8 1303.6 2781.3 1302.1 2787.1 1301.0C2792.8 1299.9 2802.0 1299.2 2805.0 1298.9" fill="none" stroke="#5088c1" stroke-width="5.8"/><circle cx="1649.6" cy="1302.6" r="2.9" fill="#5088c1"/>
</svg>
</body></html>
